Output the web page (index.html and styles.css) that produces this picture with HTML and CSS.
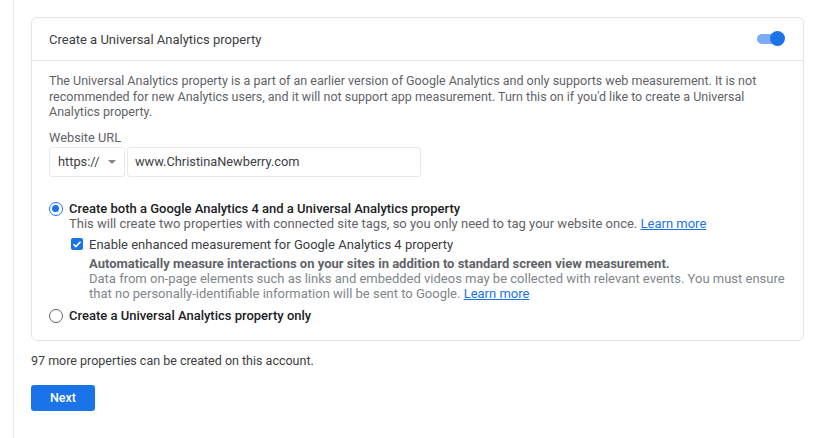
FILE: index.html
```html
<!DOCTYPE html>
<html lang="en">
<head>
<meta charset="utf-8">
<title>Create property</title>
<link rel="stylesheet" href="styles.css">
</head>
<body>
<div class="page">
  <section class="card">
    <header class="card-head">
      <span class="card-title">Create a Universal Analytics property</span>
      <span class="toggle"><span class="toggle-track"></span><span class="toggle-knob"></span></span>
    </header>
    <div class="card-body">
      <p class="desc">The Universal Analytics property is a part of an earlier version of Google Analytics and only supports web measurement. It is not recommended for new Analytics users, and it will not support app measurement. Turn this on if you'd like to create a Universal Analytics property.</p>
      <div class="label">Website URL</div>
      <div class="url-row">
        <div class="proto">https:// <span class="caret"></span></div>
        <div class="url-input">www.ChristinaNewberry.com</div>
      </div>
      <div class="option">
        <span class="radio checked"></span>
        <div class="opt-text">
          <div class="opt-title">Create both a Google Analytics 4 and a Universal Analytics property</div>
          <div class="opt-sub">This will create two properties with connected site tags, so you only need to tag your website once. <a href="#" class="link">Learn more</a></div>
        </div>
      </div>
      <div class="check-row">
        <span class="checkbox"><svg viewBox="0 0 12 12" width="12" height="12"><path d="M2.5 6.2l2.4 2.4 4.6-4.8" fill="none" stroke="#fff" stroke-width="1.6"/></svg></span>
        <div class="check-text">
          <div class="check-title">Enable enhanced measurement for Google Analytics 4 property</div>
          <div class="check-bold">Automatically measure interactions on your sites in addition to standard screen view measurement.</div>
          <div class="check-sub">Data from on-page elements such as links and embedded videos may be collected with relevant events. You must ensure that no personally-identifiable information will be sent to Google. <a href="#" class="link">Learn more</a></div>
        </div>
      </div>
      <div class="option option-last">
        <span class="radio"></span>
        <div class="opt-text">
          <div class="opt-title">Create a Universal Analytics property only</div>
        </div>
      </div>
    </div>
  </section>
  <p class="count">97 more properties can be created on this account.</p>
  <button class="next">Next</button>
</div>
</body>
</html>
```
FILE: styles.css
```css
html, body {
  margin: 0;
  padding: 0;
  background: #fff;
}
body {
  font-family: Roboto, "Liberation Sans", Arial, sans-serif;
  color: #3c4043;
  font-size: 12.5px;
}
.page {
  margin-left: 13px;
  border-left: 1px solid #eeeeee;
  padding: 17px 17px 28px 17px;
  width: 772px;
  min-height: 393px;
}
.card {
  border: 1px solid #e2e2e2;
  border-radius: 6px;
  box-sizing: border-box;
  width: 773px;
}
.card-head {
  height: 42px;
  display: flex;
  align-items: center;
  justify-content: space-between;
  padding: 0 18px 0 17px;
  border-bottom: 1px solid #e6e6e6;
}
.card-title {
  font-size: 13px;
  color: #3c4043;
}
.toggle {
  position: relative;
  width: 28px;
  height: 16px;
  display: inline-block;
}
.toggle-track {
  position: absolute;
  left: 0;
  top: 3px;
  width: 26px;
  height: 10px;
  border-radius: 5px;
  background: #7baaf7;
}
.toggle-knob {
  position: absolute;
  right: 0;
  top: 0;
  width: 15px;
  height: 15px;
  border-radius: 50%;
  background: #1a73e8;
}
.card-body {
  padding: 12px 18px 17px 17px;
}
.desc {
  margin: 0;
  line-height: 15.5px;
  color: #5f6368;
}
.label {
  margin-top: 10px;
  line-height: 15px;
  font-size: 12.8px;
  color: #5f6368;
}
.url-row {
  display: flex;
  gap: 2px;
  margin-top: 2px;
}
.proto {
  width: 76px;
  height: 30px;
  box-sizing: border-box;
  border: 1px solid #e8e8e8;
  border-radius: 3px;
  display: flex;
  align-items: center;
  padding-left: 8px;
  color: #3c4043;
  font-size: 12.8px;
}
.caret {
  margin-left: 9px;
  width: 0;
  height: 0;
  border-left: 4px solid transparent;
  border-right: 4px solid transparent;
  border-top: 4px solid #80868b;
}
.url-input {
  width: 294px;
  height: 30px;
  box-sizing: border-box;
  border: 1px solid #e8e8e8;
  border-radius: 3px;
  display: flex;
  align-items: center;
  padding-left: 7px;
  color: #3c4043;
  font-size: 12.8px;
}
.option {
  display: flex;
  align-items: flex-start;
  margin-top: 24px;
  font-size: 13px;
}
.option-last {
  margin-top: 7px;
}
.radio {
  width: 14px;
  height: 14px;
  box-sizing: border-box;
  border: 1.5px solid #5f6368;
  border-radius: 50%;
  margin-top: 1px;
  margin-right: 6px;
  flex: none;
  position: relative;
}
.radio.checked {
  border-color: #1a73e8;
}
.radio.checked::after {
  content: "";
  position: absolute;
  left: 2px;
  top: 2px;
  width: 7px;
  height: 7px;
  border-radius: 50%;
  background: #1a73e8;
}
.opt-title {
  font-weight: 500;
  color: #202124;
  line-height: 15px;
}
.opt-sub {
  color: #5f6368;
  line-height: 15px;
}
.link {
  color: #1a73e8;
  text-decoration: underline;
}
.check-row {
  display: flex;
  align-items: flex-start;
  margin-top: 6px;
  margin-left: 22px;
  font-size: 13px;
}
.checkbox {
  width: 12px;
  height: 12px;
  border-radius: 2px;
  background: #1a73e8;
  margin-top: 1.5px;
  margin-right: 6px;
  flex: none;
  display: flex;
}
.check-title {
  color: #3c4043;
  line-height: 15px;
}
.check-bold {
  margin-top: 4px;
  font-weight: 700;
  color: #5f6368;
  line-height: 15px;
}
.check-sub {
  color: #80868b;
  line-height: 15px;
}
.count {
  margin: 12px 0 0 0;
  line-height: 15px;
  color: #3c4043;
}
.next {
  margin-top: 17px;
  width: 64px;
  height: 26px;
  border: none;
  border-radius: 3px;
  background: #1a73e8;
  color: #fff;
  font-family: Roboto, "Liberation Sans", Arial, sans-serif;
  font-size: 12.5px;
  font-weight: 500;
  padding: 0;
}
```
